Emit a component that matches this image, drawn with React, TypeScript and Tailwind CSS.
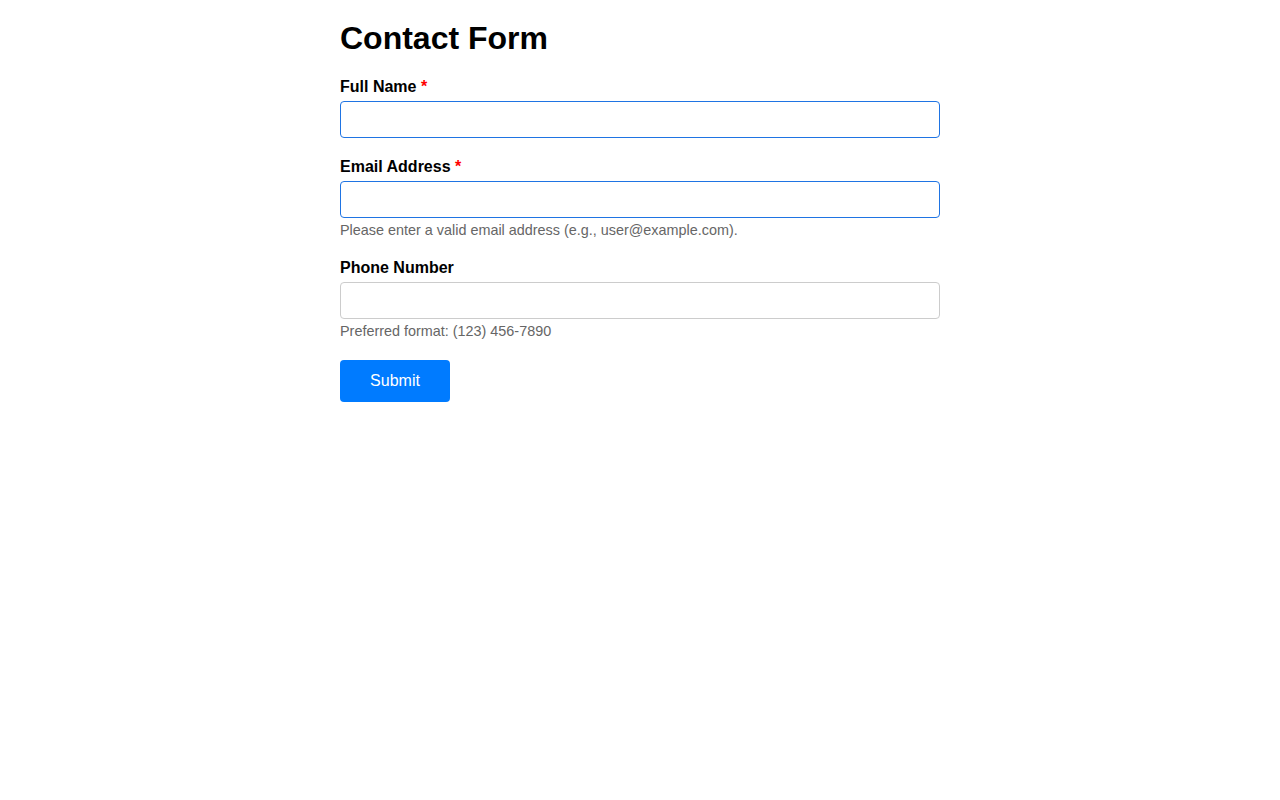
import React from "react";

const font = { fontFamily: '"Liberation Sans", Arial, sans-serif' };

function Field({
  label,
  required,
  help,
  blue,
  type,
}: {
  label: string;
  required?: boolean;
  help?: string;
  blue?: boolean;
  type: string;
}) {
  return (
    <div className="mb-[20px]">
      <label className="block text-[16px] leading-[18px] font-bold text-black mb-[5px]">
        {label}
        {required && <span className="text-[#ff0000]"> *</span>}
      </label>
      <input
        type={type}
        className={
          "block w-full h-[37px] rounded-[4px] border bg-white px-2 text-[16px] outline-none " +
          (blue ? "border-[#1f74e3]" : "border-[#cccccc]")
        }
      />
      {help && (
        <p className="mt-[4px] text-[14.4px] leading-[17px] text-[#666666]">{help}</p>
      )}
    </div>
  );
}

export default function App() {
  return (
    <div className="min-h-screen bg-white" style={font}>
      <div className="w-[600px] mx-auto pt-[20px]">
        <h1 className="text-[32px] leading-[37px] font-bold text-black mb-[21px]">
          Contact Form
        </h1>
        <form onSubmit={(e) => e.preventDefault()}>
          <Field label="Full Name" required blue type="text" />
          <Field
            label="Email Address"
            required
            blue
            type="email"
            help="Please enter a valid email address (e.g., user@example.com)."
          />
          <Field
            label="Phone Number"
            type="tel"
            help="Preferred format: (123) 456-7890"
          />
          <button
            type="submit"
            className="w-[110px] h-[42px] rounded-[4px] bg-[#007bff] text-white text-[16px]"
          >
            Submit
          </button>
        </form>
      </div>
    </div>
  );
}
